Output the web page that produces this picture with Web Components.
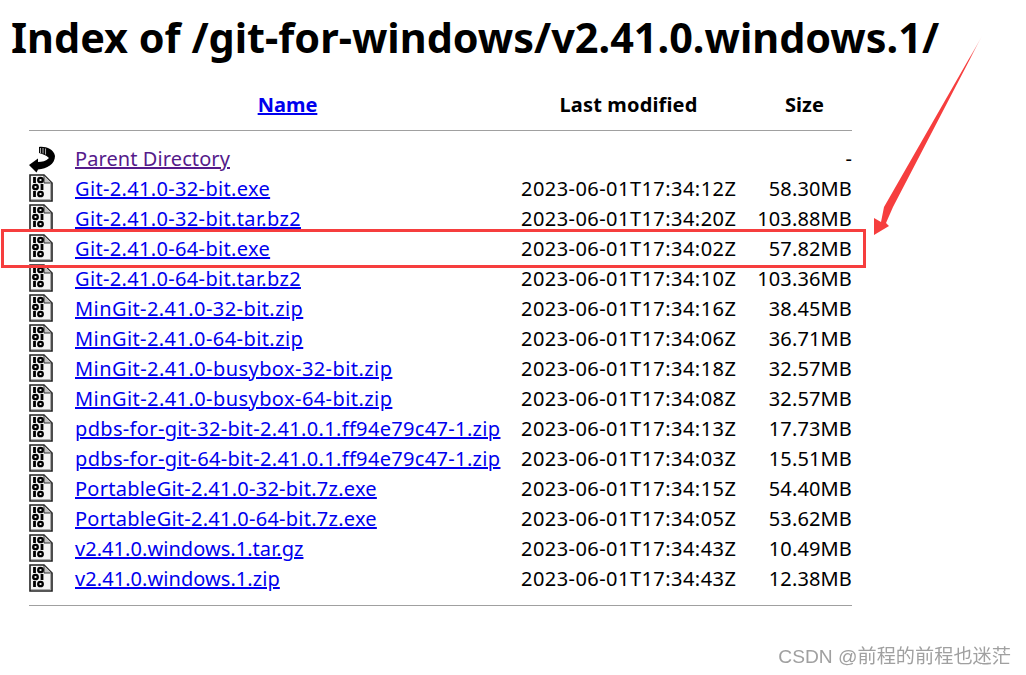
<!DOCTYPE html>
<html>
<head>
    <meta charset="utf-8">
    <title>Index of /git-for-windows/v2.41.0.windows.1/</title>
    <style>
        html, body {
            margin: 0;
            background: #fff;
            overflow: hidden;
            height: 100%;
        }
        body {
            font-family: "Noto Sans", "Noto Sans CJK SC", sans-serif;
            color: #000;
        }
    </style>
</head>
<body>
    <index-page>
        <span slot="title">Index of /git-for-windows/v2.41.0.windows.1/</span>
        <listing-table>
            <file-row icon="back" parent style="--name-ls:.09px"><a href="#">Parent Directory</a><span slot="size">-</span></file-row>
            <file-row><a href="#">Git-2.41.0-32-bit.exe</a><span slot="date">2023-06-01T17:34:12Z</span><span slot="size">58.30MB</span></file-row>
            <file-row><a href="#">Git-2.41.0-32-bit.tar.bz2</a><span slot="date">2023-06-01T17:34:20Z</span><span slot="size">103.88MB</span></file-row>
            <file-row><a href="#">Git-2.41.0-64-bit.exe</a><span slot="date">2023-06-01T17:34:02Z</span><span slot="size">57.82MB</span></file-row>
            <file-row><a href="#">Git-2.41.0-64-bit.tar.bz2</a><span slot="date">2023-06-01T17:34:10Z</span><span slot="size">103.36MB</span></file-row>
            <file-row style="--name-ls:.42px"><a href="#">MinGit-2.41.0-32-bit.zip</a><span slot="date">2023-06-01T17:34:16Z</span><span slot="size">38.45MB</span></file-row>
            <file-row style="--name-ls:.42px"><a href="#">MinGit-2.41.0-64-bit.zip</a><span slot="date">2023-06-01T17:34:06Z</span><span slot="size">36.71MB</span></file-row>
            <file-row style="--name-ls:.43px"><a href="#">MinGit-2.41.0-busybox-32-bit.zip</a><span slot="date">2023-06-01T17:34:18Z</span><span slot="size">32.57MB</span></file-row>
            <file-row style="--name-ls:.43px"><a href="#">MinGit-2.41.0-busybox-64-bit.zip</a><span slot="date">2023-06-01T17:34:08Z</span><span slot="size">32.57MB</span></file-row>
            <file-row><a href="#">pdbs-for-git-32-bit-2.41.0.1.ff94e79c47-1.zip</a><span slot="date">2023-06-01T17:34:13Z</span><span slot="size">17.73MB</span></file-row>
            <file-row><a href="#">pdbs-for-git-64-bit-2.41.0.1.ff94e79c47-1.zip</a><span slot="date">2023-06-01T17:34:03Z</span><span slot="size">15.51MB</span></file-row>
            <file-row style="--name-ls:.25px"><a href="#">PortableGit-2.41.0-32-bit.7z.exe</a><span slot="date">2023-06-01T17:34:15Z</span><span slot="size">54.40MB</span></file-row>
            <file-row style="--name-ls:.25px"><a href="#">PortableGit-2.41.0-64-bit.7z.exe</a><span slot="date">2023-06-01T17:34:05Z</span><span slot="size">53.62MB</span></file-row>
            <file-row style="--name-ls:.05px"><a href="#">v2.41.0.windows.1.tar.gz</a><span slot="date">2023-06-01T17:34:43Z</span><span slot="size">10.49MB</span></file-row>
            <file-row style="--name-ls:.06px"><a href="#">v2.41.0.windows.1.zip</a><span slot="date">2023-06-01T17:34:43Z</span><span slot="size">12.38MB</span></file-row>
        </listing-table>
        <markup-layer slot="overlay"></markup-layer>
    </index-page>

    <template id="index-page-tpl">
        <style>
            :host {
                display: block;
                position: relative;
                width: 1026px;
                height: 675px;
                overflow: hidden;
            }
            h1 {
                margin: 0;
                padding: 11px 0 0 11px;
                font-size: 41.4px;
                line-height: 52px;
                font-weight: 700;
                white-space: nowrap;
            }
            .body {
                padding: 27px 0 0 29px;
            }
        </style>
        <h1><slot name="title"></slot></h1>
        <div class="body"><slot></slot></div>
        <slot name="overlay"></slot>
    </template>

    <template id="listing-table-tpl">
        <style>
            :host {
                display: block;
                width: 823px;
                font-size: 20px;
            }
            .head {
                display: grid;
                grid-template-columns: 46px 425px 21px 215px 21px 95px;
                height: 30px;
                line-height: 30px;
                font-weight: 700;
                text-align: center;
            }
            .head a { color: #0000ee; }
            .head .lm { letter-spacing: .15px; }
            hr {
                border: 0;
                height: 1px;
                background: #a0a0a0;
                margin: 0;
            }
            .top { margin: 10px 0 13px; }
            .bottom { margin-top: 11px; }
        </style>
        <div class="head">
            <span></span>
            <span><a href="#">Name</a></span>
            <span></span>
            <span class="lm">Last modified</span>
            <span></span>
            <span>Size</span>
        </div>
        <hr class="top">
        <slot></slot>
        <hr class="bottom">
    </template>

    <template id="file-row-tpl">
        <style>
            :host {
                display: grid;
                grid-template-columns: 46px 425px 21px 215px 21px 95px;
                height: 30px;
                line-height: 30px;
                white-space: nowrap;
            }
            .icon {
                display: flex;
                align-items: center;
            }
            .name { letter-spacing: var(--name-ls, .34px); }
            .date { letter-spacing: .45px; }
            .size { text-align: right; letter-spacing: .14px; }
            ::slotted(a) { color: #0000ee; }
            :host([parent]) ::slotted(a) { color: #551a8b; }
        </style>
        <span class="icon"></span>
        <span class="name"><slot></slot></span>
        <span></span>
        <span class="date"><slot name="date"></slot></span>
        <span></span>
        <span class="size"><slot name="size"></slot></span>
    </template>

    <template id="icon-bin">
        <svg width="24" height="28" viewBox="0 0 24 28" style="display:block;margin-top:-2px">
            <path d="M1 1H15L23 9V27H1Z" fill="#f4f4f4" stroke="#222" stroke-width="1.6"/>
            <path d="M15 1V9H23Z" fill="#c4c4c4" stroke="#333" stroke-width="1"/>
            <path d="M21 10h1v16H2v-1h19z" fill="#aaa"/>
            <g fill="none" stroke="#000">
                <g stroke-width="2.800">
                    <path d="M5.500 3v6"/><path d="M13 10v6"/><path d="M5.500 17v6"/>
                </g>
                <g stroke-width="2.300">
                    <ellipse cx="11.500" cy="6" rx="2.300" ry="2.200"/>
                    <ellipse cx="6.500" cy="13" rx="2.300" ry="2.200"/>
                    <ellipse cx="11.500" cy="20" rx="2.300" ry="2.200"/>
                </g>
            </g>
        </svg>
    </template>

    <template id="icon-back">
        <svg width="27" height="27" viewBox="0 0 27 27" style="display:block">
            <path d="M10 1C16 0 25 3 26 10C26 18 18 23 9 23.500L7.500 26.500L0 19L9 12.500V16C13 16 17 15 20 12C17 9 13 8 10 7Z" fill="#000"/>
            <path d="M11.500 2v5M14 2v5.500M16.500 2.500v6" stroke="#aaa" stroke-width="1.100"/>
        </svg>
    </template>

    <template id="markup-layer-tpl">
        <style>
            :host {
                position: absolute;
                inset: 0;
                display: block;
                pointer-events: none;
            }
            .box {
                position: absolute;
                left: 1px;
                top: 229px;
                width: 859px;
                height: 33px;
                border: 3px solid #f63e3e;
            }
            svg {
                position: absolute;
                left: 0;
                top: 0;
            }
            .mark {
                position: absolute;
                right: 15px;
                top: 645px;
                font: 19.2px/24px "Liberation Sans", "Noto Sans CJK SC", sans-serif;
                color: #a0a0a0;
                white-space: nowrap;
                filter: blur(.3px);
            }
        </style>
        <div class="box"></div>
        <svg width="1026" height="675" viewBox="0 0 1026 675">
            <defs>
                <linearGradient id="fade" x1="982" y1="36" x2="874" y2="235" gradientUnits="userSpaceOnUse">
                    <stop offset="0" stop-color="#f63e3e" stop-opacity=".1"/>
                    <stop offset=".12" stop-color="#f63e3e"/>
                </linearGradient>
            </defs>
            <path d="M982 36L893 207L886 223L889 226L874 235L874 218L881 222L884 207Z" fill="url(#fade)"/>
        </svg>
        <span class="mark">CSDN @前程的前程也迷茫</span>
    </template>

    <script>
        class IndexPage extends HTMLElement {
            constructor() {
                super();
                this.attachShadow({mode: 'open'});
                this.shadowRoot.appendChild(document.getElementById('index-page-tpl').content.cloneNode(true));
            }
        }

        class ListingTable extends HTMLElement {
            constructor() {
                super();
                this.attachShadow({mode: 'open'});
                this.shadowRoot.appendChild(document.getElementById('listing-table-tpl').content.cloneNode(true));
            }
        }

        class FileRow extends HTMLElement {
            constructor() {
                super();
                this.attachShadow({mode: 'open'});
                this.shadowRoot.appendChild(document.getElementById('file-row-tpl').content.cloneNode(true));
            }

            connectedCallback() {
                const name = this.getAttribute('icon') === 'back' ? 'icon-back' : 'icon-bin';
                const svg = document.getElementById(name).content.cloneNode(true);
                this.shadowRoot.querySelector('.icon').appendChild(svg);
            }
        }

        class MarkupLayer extends HTMLElement {
            constructor() {
                super();
                this.attachShadow({mode: 'open'});
                this.shadowRoot.appendChild(document.getElementById('markup-layer-tpl').content.cloneNode(true));
            }
        }

        customElements.define('index-page', IndexPage);
        customElements.define('listing-table', ListingTable);
        customElements.define('file-row', FileRow);
        customElements.define('markup-layer', MarkupLayer);
    </script>
</body>
</html>
